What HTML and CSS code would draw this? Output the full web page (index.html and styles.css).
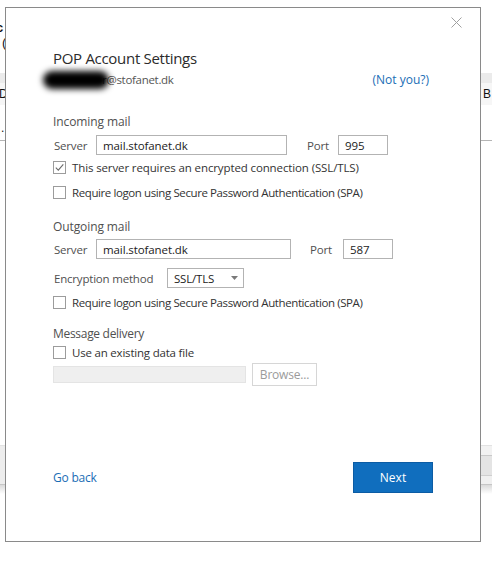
FILE: index.html
```html
<!DOCTYPE html>
<html lang="en">
<head>
<meta charset="utf-8">
<title>POP Account Settings</title>
<link rel="stylesheet" href="styles.css">
</head>
<body>
<div class="backdrop">
  <div class="bg-gap bg-gap-top"></div>
  <div class="bg-frag bg-frag-c">c</div>
  <div class="bg-frag bg-frag-paren">(</div>
  <div class="bg-gap bg-gap-mid"></div>
  <div class="bg-band"></div>
  <div class="bg-row"><span class="bg-d">D</span><span class="bg-b">; B</span></div>
  <div class="bg-frag bg-frag-dot">.</div>
  <div class="bg-rule"></div>
  <div class="bg-gap bg-gap-long"></div>
  <div class="bg-bar"><div class="bg-bar-left"></div><div class="bg-bar-right"><div class="bg-cell-a"></div><div class="bg-cell-b"></div><div class="bg-cell-c"></div></div></div>
  <div class="bg-shadow"></div>
</div>

<div class="dialog">
  <button class="close" aria-label="Close">
    <svg width="11" height="11" viewBox="0 0 11 11"><path d="M0.5 0.5 L10.5 10.5 M10.5 0.5 L0.5 10.5" stroke="#a0a0a0" stroke-width="1" fill="none"/></svg>
  </button>

  <h1 class="title">POP Account Settings</h1>
  <div class="account">
    <span class="email"><span class="redact"></span>r@stofanet.dk</span>
    <a class="link not-you">(Not you?)</a>
  </div>

  <div class="section-label section-incoming">Incoming mail</div>
  <div class="field-row">
    <span class="lbl lbl-server">Server</span>
    <span class="input input-server-in">mail.stofanet.dk</span>
    <span class="lbl lbl-port-in">Port</span>
    <span class="input input-port">995</span>
  </div>
  <div class="check">
    <span class="box"><svg width="11" height="11" viewBox="0 0 11 11"><path d="M1.8 5.6 L4.3 8.1 L9.3 2.4" stroke="#6a6a6a" stroke-width="1.1" fill="none"/></svg></span>
    <span>This server requires an encrypted connection (SSL/TLS)</span>
  </div>
  <div class="check">
    <span class="box"></span>
    <span class="spa">Require logon using Secure Password Authentication (SPA)</span>
  </div>

  <div class="section-label section-outgoing">Outgoing mail</div>
  <div class="field-row">
    <span class="lbl lbl-server">Server</span>
    <span class="input input-server-out">mail.stofanet.dk</span>
    <span class="lbl lbl-port-out">Port</span>
    <span class="input input-port">587</span>
  </div>
  <div class="field-row enc-row">
    <span class="lbl lbl-enc">Encryption method</span>
    <span class="select">SSL/TLS<svg class="caret" width="7" height="4" viewBox="0 0 7 4"><path d="M0 0 H7 L3.5 4 Z" fill="#7a7a7a"/></svg></span>
  </div>
  <div class="check check-tight">
    <span class="box"></span>
    <span class="spa">Require logon using Secure Password Authentication (SPA)</span>
  </div>

  <div class="section-label section-delivery">Message delivery</div>
  <div class="check check-delivery">
    <span class="box"></span>
    <span>Use an existing data file</span>
  </div>
  <div class="file-row">
    <span class="input-disabled"></span>
    <button class="browse" disabled>Browse...</button>
  </div>

  <div class="footer">
    <a class="link go-back">Go back</a>
    <button class="next">Next</button>
  </div>
</div>
</body>
</html>
```

FILE: styles.css
```css
* { box-sizing: border-box; }

html, body {
  margin: 0;
  padding: 0;
}

body {
  width: 492px;
  height: 580px;
  position: relative;
  overflow: hidden;
  background: #ffffff;
  font-family: "Open Sans", "Noto Sans", sans-serif;
  color: #333333;
}

/* ---------- background window fragments ---------- */
.backdrop {
  display: flex;
  flex-direction: column;
  width: 492px;
  height: 580px;
  font-family: "Liberation Sans", Arial, sans-serif;
  color: #111;
}
.bg-gap-top { height: 20px; }
.bg-frag {
  font-size: 13px;
  line-height: 16px;
  height: 16px;
}
.bg-frag-c { text-indent: -4px; font-weight: bold; }
.bg-frag-paren { padding-left: 2px; height: 14px; line-height: 14px; }
.bg-gap-mid { height: 23px; }
.bg-band {
  height: 10px;
  background: #ebebeb;
}
.bg-row {
  height: 22px;
  background: #f6f6f6;
  display: flex;
  justify-content: space-between;
  align-items: center;
  font-size: 12px;
}
.bg-d { margin-left: -1px; }
.bg-b { margin-right: 1px; }
.bg-frag-dot {
  margin-top: 16px;
  padding-left: 1px;
  height: 14px;
  line-height: 14px;
  font-size: 12px;
}
.bg-rule {
  margin-top: 5px;
  height: 1px;
  background: #b5b5b5;
}
.bg-gap-long { height: 304px; }
.bg-bar {
  height: 40px;
  display: flex;
  background: #ededed;
  border-top: 1px solid #e2e2e2;
  border-bottom: 1px solid #c6c6c6;
}
.bg-bar-left { flex: 1; }
.bg-bar-right {
  width: 12px;
  display: flex;
  flex-direction: column;
}
.bg-cell-a { height: 10px; background: #f2f2f2; border-bottom: 1px solid #c9c9c9; }
.bg-cell-b { height: 20px; background: #e4e4e4; border-bottom: 1px solid #cfcfcf; }
.bg-cell-c { flex: 1; background: #f0f0f0; }
.bg-shadow {
  height: 9px;
  background: linear-gradient(#dadada, #ffffff);
}

/* ---------- dialog ---------- */
.dialog {
  position: absolute;
  left: 5px;
  top: 7px;
  width: 476px;
  height: 535px;
  background: #ffffff;
  border: 1px solid #8a8a8a;
  padding: 40px 47px 48px 47px;
  display: flex;
  flex-direction: column;
  font-size: 12px;
}

.close {
  position: absolute;
  right: 18px;
  top: 9px;
  width: 11px;
  height: 11px;
  padding: 0;
  border: 0;
  background: transparent;
  display: block;
}
.close svg { display: block; }

.title {
  margin: 0;
  font-size: 15px;
  font-weight: normal;
  line-height: 20px;
  height: 20px;
  color: #2b2b2b;
  letter-spacing: -0.3px;
}

.account {
  margin-top: 4px;
  height: 16px;
  line-height: 16px;
  display: flex;
  justify-content: space-between;
  padding-right: 4px;
}
.email {
  display: flex;
  align-items: center;
  color: #555555;
  font-size: 11.5px;
  letter-spacing: -0.3px;
}
.redact {
  display: inline-block;
  width: 66px;
  height: 18px;
  margin-left: -10px;
  margin-right: -7px;
  background: #000;
  border-radius: 9px;
  filter: blur(3px);
  position: relative;
  z-index: 1;
}

.link {
  color: #1a6db5;
  text-decoration: none;
  cursor: pointer;
}

.section-label {
  height: 16px;
  line-height: 16px;
  color: #505050;
  letter-spacing: -0.1px;
}
.section-incoming { margin-top: 26px; }
.section-outgoing { margin-top: 14px; }
.section-delivery { margin-top: 11px; letter-spacing: -0.3px; }

.field-row {
  display: flex;
  align-items: center;
  height: 20px;
  margin-top: 5px;
  color: #505050;
  font-size: 11.5px;
  letter-spacing: -0.2px;
}
.section-outgoing + .field-row { margin-top: 4px; }
.enc-row { margin-top: 9px; }

.lbl { display: block; flex: none; }
.lbl-server { width: 43px; padding-left: 1px; }
.lbl-port-in { width: 31px; margin-left: 20px; }
.lbl-port-out { width: 33px; margin-left: 19px; }
.lbl-enc { width: 114px; padding-left: 1px; }

.input {
  display: flex;
  align-items: center;
  height: 20px;
  border: 1px solid #b3b3b3;
  padding-left: 6px;
  font-size: 11.5px;
  color: #222;
  flex: none;
  letter-spacing: -0.1px;
}
.input-server-in { width: 191px; }
.input-server-out { width: 195px; }
.input-port { width: 50px; }

.select {
  display: flex;
  align-items: center;
  width: 77px;
  height: 20px;
  border: 1px solid #b3b3b3;
  padding-left: 6px;
  font-size: 11.5px;
  color: #222;
  letter-spacing: -0.2px;
}
.caret { margin-left: auto; margin-right: 5px; }

.check {
  display: flex;
  align-items: center;
  height: 25px;
  color: #333;
  font-size: 11.5px;
  letter-spacing: -0.12px;
}
.check .spa { letter-spacing: -0.4px; }
.check-tight { margin-top: 2px; }
.check-delivery { height: 21px; letter-spacing: -0.2px; }

.box {
  width: 13px;
  height: 13px;
  border: 1px solid #9c9c9c;
  background: #fff;
  margin-right: 6px;
  display: flex;
  align-items: center;
  justify-content: center;
  flex: none;
}
.box svg { display: block; }

.file-row {
  display: flex;
  align-items: center;
  height: 23px;
}
.input-disabled {
  width: 193px;
  height: 17px;
  background: #efefef;
  border: 1px solid #e4e4e4;
}
.browse {
  margin-left: 6px;
  width: 65px;
  height: 23px;
  border: 1px solid #d6d6d6;
  background: #ffffff;
  color: #9b9b9b;
  font-family: inherit;
  font-size: 12px;
  padding: 0;
  letter-spacing: -0.2px;
}

.footer {
  margin-top: auto;
  display: flex;
  justify-content: space-between;
  align-items: center;
  height: 31px;
}
.go-back { font-size: 12px; letter-spacing: -0.2px; }
.next {
  width: 80px;
  height: 31px;
  background: #106ebe;
  border: 1px solid #0c5ca4;
  color: #ffffff;
  font-family: inherit;
  font-size: 12px;
  padding: 0;
}
```
